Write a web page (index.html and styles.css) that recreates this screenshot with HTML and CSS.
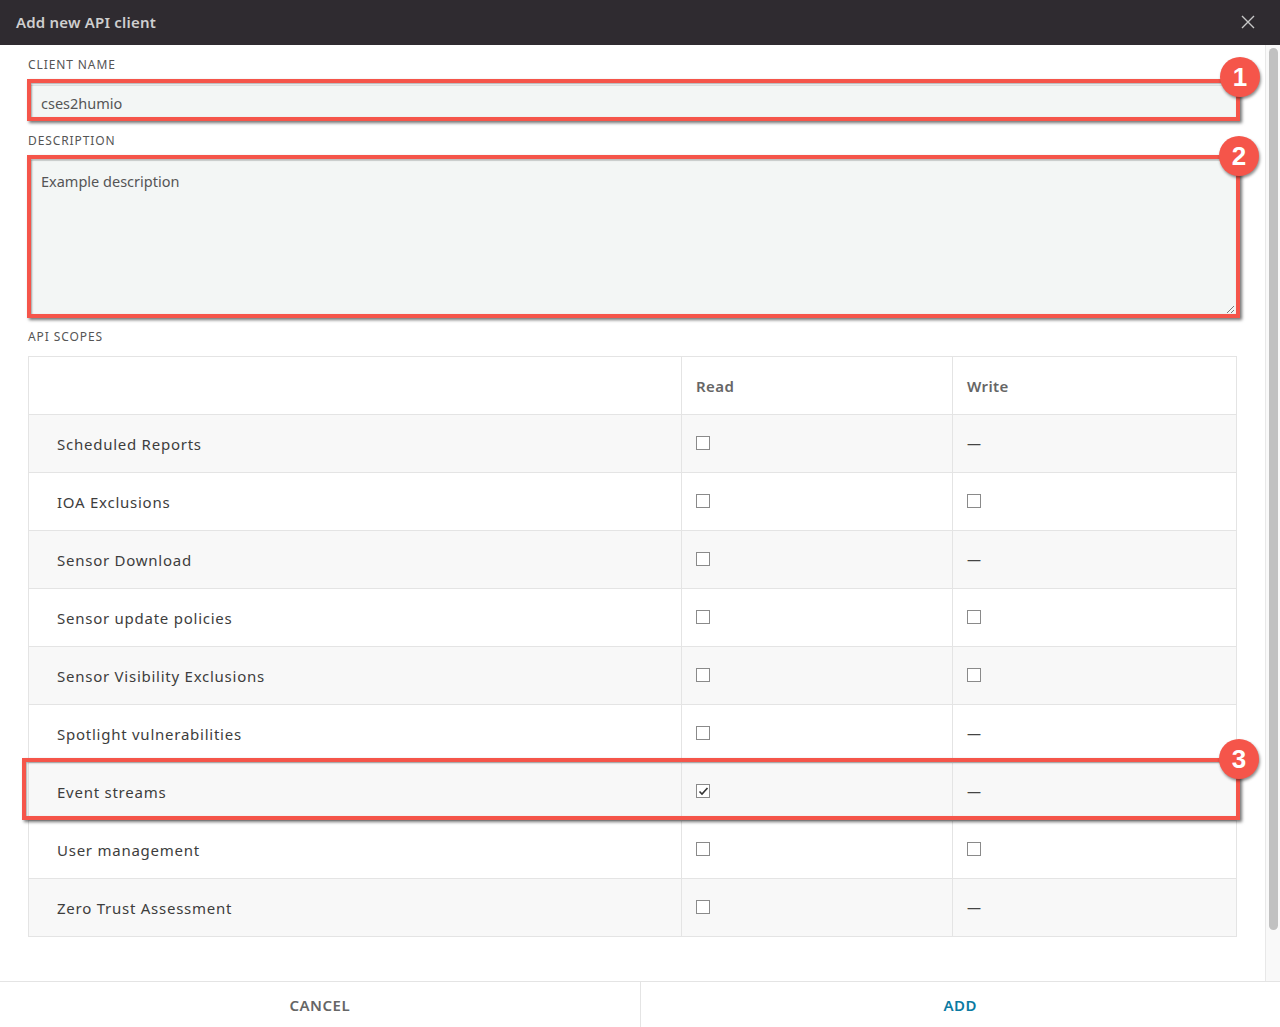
FILE: index.html
```html
<!DOCTYPE html>
<html lang="en">
<head>
<meta charset="utf-8">
<title>Add new API client</title>
<link rel="stylesheet" href="styles.css">
</head>
<body>
<div class="modal">
  <header class="modal-header">
    <h1 class="modal-title">Add new API client</h1>
    <button class="close-btn" aria-label="Close">
      <svg width="14" height="14" viewBox="0 0 14 14"><path d="M1 1L13 13M13 1L1 13" stroke="#c8c8c8" stroke-width="1.4" fill="none"/></svg>
    </button>
  </header>
  <div class="modal-body">
    <div class="content">
      <label class="field-label">Client name</label>
      <div class="input">cses2humio</div>
      <label class="field-label">Description</label>
      <div class="textarea">Example description<span class="grip"></span></div>
      <label class="field-label">API scopes</label>
      <table class="scopes">
        <thead>
          <tr><th class="name"></th><th>Read</th><th>Write</th></tr>
        </thead>
        <tbody>
          <tr><td class="name">Scheduled Reports</td><td><span class="cb"></span></td><td><span class="dash">—</span></td></tr>
          <tr><td class="name">IOA Exclusions</td><td><span class="cb"></span></td><td><span class="cb"></span></td></tr>
          <tr><td class="name">Sensor Download</td><td><span class="cb"></span></td><td><span class="dash">—</span></td></tr>
          <tr><td class="name">Sensor update policies</td><td><span class="cb"></span></td><td><span class="cb"></span></td></tr>
          <tr><td class="name">Sensor Visibility Exclusions</td><td><span class="cb"></span></td><td><span class="cb"></span></td></tr>
          <tr><td class="name">Spotlight vulnerabilities</td><td><span class="cb"></span></td><td><span class="dash">—</span></td></tr>
          <tr><td class="name">Event streams</td><td><span class="cb checked"><svg width="11" height="11" viewBox="0 0 11 11"><path d="M1.5 5.5L4 8L9.5 2" stroke="#333" stroke-width="1.6" fill="none"/></svg></span></td><td><span class="dash">—</span></td></tr>
          <tr><td class="name">User management</td><td><span class="cb"></span></td><td><span class="cb"></span></td></tr>
          <tr><td class="name">Zero Trust Assessment</td><td><span class="cb"></span></td><td><span class="dash">—</span></td></tr>
        </tbody>
      </table>
    </div>
    <div class="scrollbar"><div class="thumb"></div></div>
  </div>
  <footer class="modal-footer">
    <button class="btn cancel">CANCEL</button>
    <button class="btn add">ADD</button>
  </footer>

  <div class="annot annot-1"></div>
  <div class="annot annot-2"></div>
  <div class="annot annot-3"></div>
  <div class="badge badge-1">1</div>
  <div class="badge badge-2">2</div>
  <div class="badge badge-3">3</div>
</div>
</body>
</html>
```

FILE: styles.css
```css
* { box-sizing: border-box; }
html, body { margin: 0; padding: 0; }
body {
  font-family: "Noto Sans", "DejaVu Sans", sans-serif;
  background: #fff;
  color: #444;
}
.modal {
  position: relative;
  width: 1280px;
  height: 1027px;
  display: flex;
  flex-direction: column;
  overflow: hidden;
}
.modal-header {
  height: 45px;
  background: #2f2b30;
  display: flex;
  align-items: center;
  justify-content: space-between;
  padding: 0 24px 2px 16px;
  flex: none;
}
.modal-title {
  margin: 0;
  font-size: 15px;
  font-weight: 600;
  color: #cfcfcf;
  letter-spacing: 0.2px;
}
.close-btn {
  background: none;
  border: 0;
  padding: 0;
  width: 16px;
  height: 16px;
  display: flex;
  align-items: center;
  justify-content: center;
}
.modal-body {
  flex: 1;
  display: flex;
  min-height: 0;
}
.content {
  flex: 1;
  padding: 12px 28px 0 28px;
  display: flex;
  flex-direction: column;
}
.field-label {
  display: block;
  font-size: 12px;
  letter-spacing: 0.9px;
  text-transform: uppercase;
  color: #555;
  line-height: 16px;
  height: 16px;
}
.input {
  margin-top: 12px;
  height: 35px;
  background: #f3f6f5;
  border: 1px solid #dfe3e2;
  padding: 0 12px;
  display: flex;
  align-items: center;
  font-size: 14.5px;
  color: #555;
  margin-bottom: 13px;
}
.textarea {
  position: relative;
  margin-top: 11px;
  height: 156px;
  background: #f3f6f5;
  border: 1px solid #dfe3e2;
  padding: 10px 12px;
  font-size: 14.5px;
  color: #555;
  margin-bottom: 13px;
}
.grip {
  position: absolute;
  right: 2px;
  bottom: 2px;
  width: 7px;
  height: 7px;
  background: linear-gradient(135deg, transparent 45%, #777 45%, #777 55%, transparent 55%, transparent 75%, #777 75%, #777 85%, transparent 85%);
}
.scopes {
  margin-top: 11px;
  width: 1209px;
  border-collapse: collapse;
  border: 1px solid #e4e4e4;
  table-layout: fixed;
}
.scopes th, .scopes td {
  height: 58px;
  border: 1px solid #e4e4e4;
  text-align: left;
  padding: 0 14px;
  vertical-align: middle;
}
.scopes th.name, .scopes td.name {
  width: 653px;
  padding-left: 28px;
}
.scopes th:nth-child(2) { width: 271px; }
.scopes th {
  font-size: 15px;
  font-weight: 600;
  color: #666;
  letter-spacing: 0.4px;
  background: #fff;
}
.scopes td {
  font-size: 15px;
  color: #3d3d3d;
  letter-spacing: 0.75px;
}
.scopes tbody tr:nth-child(odd) td { background: #f8f8f8; }
.scopes tbody tr:nth-child(even) td { background: #fff; }
.cb {
  display: inline-flex;
  align-items: center;
  justify-content: center;
  width: 14px;
  height: 14px;
  border: 1px solid #8a8a8a;
  background: #fff;
  vertical-align: middle;
  position: relative;
  top: -2px;
}
.dash {
  color: #444;
  font-size: 14px;
  position: relative;
  top: -1px;
}
.scrollbar {
  width: 15px;
  flex: none;
  background: #f9f9f9;
  border-left: 1px solid #e8e8e8;
  padding: 3px 2px 0 3px;
}
.thumb {
  width: 9px;
  height: 882px;
  background: #c1c1c1;
  border-radius: 5px;
}
.modal-footer {
  height: 46px;
  flex: none;
  display: flex;
  border-top: 1px solid #e4e4e4;
}
.btn {
  flex: 1;
  background: #fff;
  border: 0;
  font-family: "Noto Sans", "DejaVu Sans", sans-serif;
  font-size: 15px;
  font-weight: 600;
  letter-spacing: 0.5px;
  padding: 0;
}
.btn.cancel { color: #666; }
.btn.add { color: #0b7aa2; border-left: 1px solid #e4e4e4; }

.annot {
  position: absolute;
  border: 4px solid #f5554a;
  box-shadow: 2px 2px 3px rgba(0, 0, 0, 0.55), inset 1px 1px 2px rgba(0, 0, 0, 0.35);
}
.annot-1 { left: 27px; top: 79px; width: 1213px; height: 42px; }
.annot-2 { left: 27px; top: 155px; width: 1213px; height: 163px; }
.annot-3 { left: 22px; top: 758px; width: 1218px; height: 62px; }
.badge {
  position: absolute;
  width: 40px;
  height: 40px;
  border-radius: 50%;
  background: #f5554a;
  color: #fff;
  font-family: "Liberation Sans", Arial, sans-serif;
  font-weight: 700;
  font-size: 26px;
  display: flex;
  align-items: center;
  justify-content: center;
  box-shadow: 1px 2px 3px rgba(0, 0, 0, 0.45);
}
.badge-1 { left: 1220px; top: 57px; }
.badge-2 { left: 1219px; top: 136px; }
.badge-3 { left: 1219px; top: 739px; }
```
